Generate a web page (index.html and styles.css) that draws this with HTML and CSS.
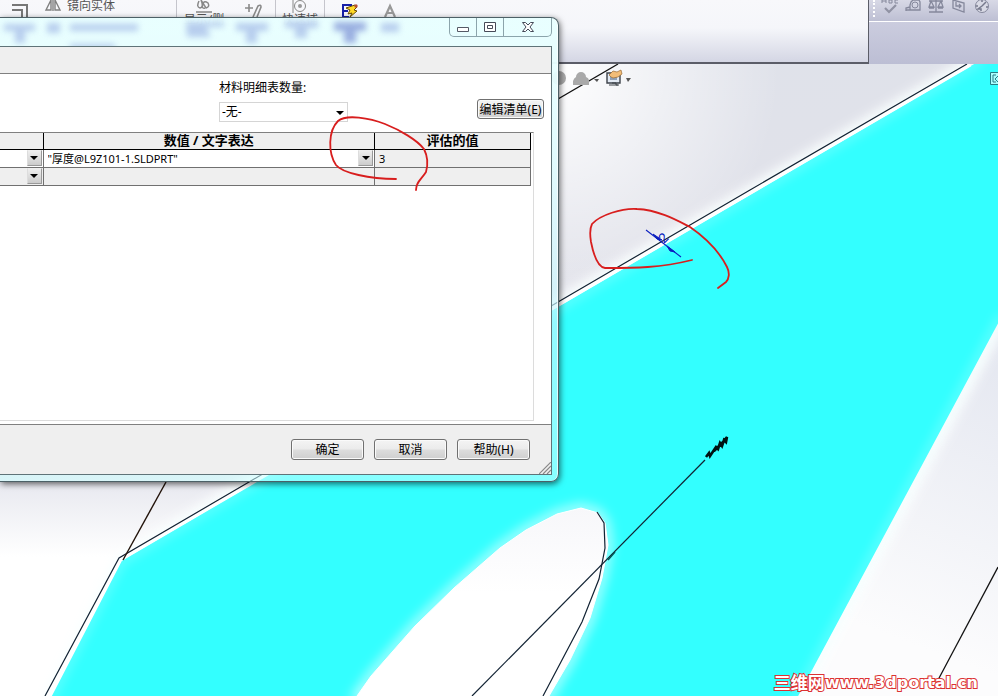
FILE: index.html
```
<!DOCTYPE html>
<html lang="zh-CN">
<head>
    <meta charset="UTF-8">
    <meta name="viewport" content="width=device-width, initial-scale=1.0">
    <title>方程式</title>
    <link rel="stylesheet" href="styles.css">
</head>
<body>
    <!-- model view -->
    <svg class="scene" viewBox="0 0 998 696" preserveAspectRatio="xMinYMin slice" aria-hidden="true">
        <defs>
            <linearGradient id="sky" x1="0" y1="0" x2="0" y2="1">
                <stop offset="0" stop-color="#dfe2ea"/>
                <stop offset=".35" stop-color="#e1e2ea"/>
                <stop offset=".69" stop-color="#e7e8ef"/>
                <stop offset=".8" stop-color="#ffffff"/>
            </linearGradient>
            <radialGradient id="corner" gradientUnits="userSpaceOnUse" cx="550" cy="70" r="230">
                <stop offset="0" stop-color="#fff"/>
                <stop offset="1" stop-color="#fff" stop-opacity="0"/>
            </radialGradient>
            <linearGradient id="side" gradientUnits="userSpaceOnUse" x1="900" y1="640" x2="1010" y2="350">
                <stop offset="0" stop-color="#fcfcfd"/>
                <stop offset="1" stop-color="#e4e7f0"/>
            </linearGradient>
            <linearGradient id="slot" x1="0" y1="0" x2="0" y2="1">
                <stop offset="0" stop-color="#f7f7fa"/>
                <stop offset=".45" stop-color="#fff"/>
            </linearGradient>
            <filter id="soft" x="-20%" y="-20%" width="140%" height="140%"><feGaussianBlur stdDeviation="6"/></filter>
        </defs>
        <rect width="998" height="696" fill="url(#sky)"/>
        <rect x="550" y="60" width="448" height="260" fill="url(#corner)"/>
        <path d="M998 315 998 696 790 696Z" fill="url(#side)"/>
        <path d="M980 60 558 305 254 481 121 561 48 700M1002 316 796 700" fill="none" stroke="#fff" stroke-width="15" filter="url(#soft)"/>
        <path d="M981 60 558 307 256 482 121 561 49 700 796 700 1002 316 1002 60Z" fill="#33ffff"/>
        <path d="M981 60 558 307 256 482 121 561 49 700M796 700 1002 316" fill="none" stroke="#d5ffff" stroke-width="4" opacity=".6" filter="url(#soft)"/>
        <path d="M970 64 558 304 252 482 120 559 47 700" fill="none" stroke="#fff" stroke-width="5"/>
        <path class="edge" d="M967 64 750 190 558 302 249 482 119 558 45 696"/>
        <path d="M357 696 371 676 415 626 454 588 500 548 526 530 557 514 581 508 598 513 605 523 608 545 602 578 590 618 570 660 549 696Z" fill="none" stroke="#c5ffff" stroke-width="8" filter="url(#soft)"/>
        <path d="M357 696 371 676 415 626 454 588 500 548 526 530 557 514 581 508 598 513 605 523 608 545 602 578 590 618 570 660 549 696Z" fill="url(#slot)" stroke="#fff"/>
        <path class="edge" d="M597 512 604 523 605 548 599 579 582 622 543 696"/>
        <path class="edge" d="M472 696 705 460"/>
        <path d="M608 560 615 552" stroke="#055" stroke-width="1.5"/>
        <path d="M706 457l3-4 1 3 4-6M714 450l2-3 2 2 2-6 2 3 2-6 2 2 1-5-4 5-6 6-3 3" fill="none" stroke="#001212" stroke-width="2.600"/>
        <path d="M166 482 123 560" stroke="#22130a" stroke-width="1.4"/>
        <path d="M558 99 618 64" stroke="#111" stroke-width="1.4"/>
        <path d="M998 567 938 680" stroke="#111" stroke-width="1.3"/>
        <!-- heads-up view icons -->
        <circle cx="559" cy="78" r="7" fill="#a9a9a9"/>
        <path d="M573 85v-4q1-3 3-4a5 5 0 1 1 10 0q3 1 3 4v4Z" fill="#a9a9a9"/>
        <path d="M594 79h5l-2 3ZM626 78h5l-3 4Z" fill="#555"/>
        <path d="M607 73h13v10h-13Z" fill="#e3eaf4" stroke="#3d4249" stroke-width="1.4"/>
        <path d="M610 76h7v4h-7Z" fill="#8fa1b8"/>
        <path d="M612 83h4v2h3M609 85h9" stroke="#3d4249" fill="none"/>
        <path d="M609 75l4-4 4 1 4-2 1 4-4 3-5 1-2-1Z" fill="#f2bd78" stroke="#9a6a32" stroke-width=".7"/>
        <path d="M990.500 72.500h12v12h-12Z" fill="#aff" stroke="#287c86"/>
        <path d="M996 75h-3v7h3M998 76l-3 3 3 3" fill="none" stroke="#287c86"/>
        <!-- thickness dimension -->
        <g stroke="#0a1fc0" fill="#0a1fc0">
            <path d="M646 230 681 257" stroke-width="1.1"/>
            <path d="M653 234 662 240 657 239ZM667 246 675 252 670 251Z"/>
            <text class="dimension" transform="translate(664 244) rotate(-45)">2</text>
        </g>
    </svg>

    <header class="topbar">
        <div class="ribbon">
            <div class="tool">
                <svg width="20" height="18" viewBox="0 0 20 18"><path d="M2 5h15v13M2 10h10v8" fill="none" stroke="#777" stroke-width="2"/></svg>
            </div>
            <div class="mirror">
                <svg width="18" height="12" viewBox="0 0 18 12"><path d="M7 0 2 10h5V0M11 0l5 10h-5V0M9 0v11" fill="none" stroke="#808080" stroke-width="1.4"/></svg>
                <span>镜向实体</span>
            </div>
            <div class="tool tool-wide">
                <svg width="20" height="14" viewBox="0 0 20 14"><path d="M5 1q-3 6 1 7 4-1 1-8l5 8q4-1 2-5-4-3-5 1-2 5 2 4M2 12h16" fill="none" stroke="#888" stroke-width="1.5"/></svg>
                <span>显示/删</span>
            </div>
            <div class="tool tool-pencil">
                <svg width="18" height="18" viewBox="0 0 18 18"><path d="M1 8h8M5 4v8M9 17l5-11q3-2 3 1l-4 10" fill="none" stroke="#8a8a8a" stroke-width="1.6"/></svg>
            </div>
            <div class="tool tool-snap">
                <svg width="18" height="14" viewBox="0 0 18 14"><path d="M2 0v13" stroke="#888"/><circle cx="9" cy="6" r="5.500" fill="none" stroke="#888"/><circle cx="9" cy="6" r="2" fill="#999"/></svg>
                <span>快速捕</span>
            </div>
            <div class="tool tool-sketch">
                <svg width="18" height="18" viewBox="0 0 18 18"><path d="M11 5H2v12h6M2 11h5" fill="none" stroke="#1720a8" stroke-width="2"/><path d="M5 8l9-3 2 2-3 3 3 1-7 6 2-4-4 1 2-4Z" fill="#ffd927" stroke="#6b4d05"/><circle cx="15" cy="6" r="1.700" fill="#b65034"/></svg>
            </div>
            <div class="tool tool-text">
                <svg width="18" height="18" viewBox="0 0 18 18"><path d="M4 17 9 6l5 11M6 13h6" fill="none" stroke="#999" stroke-width="2.200"/></svg>
            </div>
        </div>
        <div class="tools-area">
            <div class="quick">
                <i class="grip"></i>
                <svg width="18" height="14" viewBox="0 0 18 14"><path d="M1 3V0M5 3V0M1 1h4M8 3h3V0H8V3ZM17 0h-3v3h3" fill="none" stroke="#85889c"/><path d="M4 8l4 4 7-7" fill="none" stroke="#9092a3" stroke-width="2.200"/></svg>
                <svg width="18" height="14" viewBox="0 0 18 14"><path d="M7 2l2-2h6l1 2v8H6V5ZM6 7 2 8v3M2 10h14" fill="none" stroke="#85889c" stroke-width="1.300"/><circle cx="11" cy="5" r="3" fill="none" stroke="#85889c"/></svg>
                <svg width="18" height="14" viewBox="0 0 18 14"><path d="M9 0v12M2 12h14M2 1h14M4 1 2 7h5ZM14 1l-3 6h5ZM2 8h5M11 8h5" fill="none" stroke="#85889c" stroke-width="1.300"/></svg>
                <svg width="18" height="14" viewBox="0 0 18 14"><path d="M3 0v8l11 4V3L3 0M6 2v4h5M9 4l2 2-2 2" fill="none" stroke="#85889c" stroke-width="1.300"/></svg>
                <svg width="18" height="14" viewBox="0 0 18 14"><circle cx="9" cy="6" r="6.500" fill="#d9dae5" stroke="#85889c"/><path d="M9 6l4-4M9 0v2M3 6h2M13 7h2M9 6 5 9h3v2" fill="none" stroke="#777a8d" stroke-width="1.500"/></svg>
            </div>
        </div>
    </header>

    <section class="dialog" role="dialog" aria-label="方程式">
        <div class="titlebar">
            <svg class="glass" width="410" height="28" viewBox="0 0 410 28" aria-hidden="true">
                <defs><filter id="blur"><feGaussianBlur stdDeviation="3"/></filter></defs>
                <g fill="#8fa6e0" opacity=".55" filter="url(#blur)">
                    <path d="M4 6h31v7H25v12H15V13H4ZM47 5h13v10H47ZM70 6h68v7H70ZM70 26h45v6H70ZM186 4h38v5h-18l5 10h-24ZM236 5h32v8h-11v12H246V13h-10ZM285 3h33v7h-11v10h-12V10h-10ZM381 5h18v9h-18Z"/>
                    <path d="M334 4h32v9h-10v12h-12V13h-10Z" fill="#5a6ec8"/>
                </g>
            </svg>
            <div class="window-buttons">
                <button aria-label="最小化"><svg width="14" height="12" viewBox="0 0 14 12"><path d="M1.500 6.500h11v4h-11Z" fill="#fff" stroke="#555a66"/></svg></button>
                <button aria-label="最大化"><svg width="14" height="12" viewBox="0 0 14 12"><path d="M1.500 1.500h11v9h-11ZM4.500 4.500h5v3h-5Z" fill="#fff" stroke="#454a58"/></svg></button>
                <button class="close" aria-label="关闭"><svg width="14" height="12" viewBox="0 0 14 12"><path d="M1.500 1.500h3L7 4l2.500-2.500h3L9 6l3.500 4.500h-3L7 8l-2.500 2.500h-3L5 6Z" fill="#fff" stroke="#454a58"/></svg></button>
            </div>
        </div>
        <div class="client">
            <div class="strip"></div>
            <div class="content">
                <div class="form">
                    <div class="field">
                        <label for="quantity">材料明细表数量:</label>
                        <select id="quantity"><option>-无-</option></select>
                    </div>
                    <button class="btn edit">编辑清单(E)</button>
                </div>
                <div class="list">
                    <table>
                        <colgroup><col class="col-name"><col><col class="col-result"></colgroup>
                        <thead>
                            <tr><th></th><th>数值 / 文字表达</th><th>评估的值</th></tr>
                        </thead>
                        <tbody>
                            <tr class="active">
                                <td><div class="cell"><button class="drop" aria-label="名称"></button></div></td>
                                <td><div class="cell"><input type="text" aria-label="数值 / 文字表达" value="&quot;厚度@L9Z101-1.SLDPRT&quot;"><button class="drop" aria-label="选择"></button></div></td>
                                <td class="result">3</td>
                            </tr>
                            <tr>
                                <td><div class="cell"><button class="drop" aria-label="名称"></button></div></td>
                                <td></td>
                                <td class="result"></td>
                            </tr>
                        </tbody>
                    </table>
                </div>
            </div>
            <div class="footer">
                <button class="btn">确定</button>
                <button class="btn">取消</button>
                <button class="btn">帮助(H)</button>
                <svg class="resize" width="12" height="12" viewBox="0 0 12 12"><path d="M0 12 12 0M4 12l8-8M8 12l4-4" stroke="#888" stroke-width="1.200"/></svg>
            </div>
        </div>
    </section>

    <!-- red pen marks -->
    <svg class="marks" viewBox="0 0 998 696" preserveAspectRatio="xMinYMin slice" aria-hidden="true">
        <path d="M396 179C370 179 342 173 336 165 328 153 328 131 338 121 346 114 370 118 385 124 400 130 417 140 424 149 428 157 428 165 426 172 421 180 416 182 416 190"/>
        <path d="M692 260C660 268 635 268 605 268 597 267 593 252 591 242 590 236 590 228 592 224 600 215 622 208 637 209 660 210 680 222 690 227 706 238 720 253 727 267 730 273 729 279 726 282L718 288"/>
    </svg>

    <div class="watermark"><span>三维网</span>www.3dportal.cn</div>
</body>
</html>
```
FILE: styles.css
```
* {
  box-sizing: border-box;
}
body {
  position: relative;
  margin: 0;
  min-height: 100vh;
  overflow: hidden;
  font-family: "Noto Sans", "Noto Sans CJK SC", sans-serif;
  font-size: 12px;
  color: #000;
}
button, input, select {
  font: inherit;
  color: inherit;
}
svg {
  flex: none;
}
.scene, .marks {
  position: absolute;
  top: 0;
  left: 0;
  width: 100%;
  height: 100%;
}
.edge {
  fill: none;
  stroke: #123;
  stroke-width: 1.2;
}
.dimension {
  font: 14px "Liberation Sans", sans-serif;
  stroke: none;
}
.marks {
  pointer-events: none;
}
.marks path {
  fill: none;
  stroke: #d81e1e;
  stroke-width: 1.8;
  stroke-linecap: round;
}

/* toolbar */
.topbar {
  position: relative;
  display: flex;
  height: 64px;
}
.ribbon {
  flex: 1;
  display: flex;
  align-items: flex-start;
  background: linear-gradient(#f8f8fb, #f5f6fa 45%, #d4d6e4);
  border-right: 1px solid #5b5d68;
  border-bottom: 2px solid #5b5d68;
  color: #555;
}
.tool {
  display: flex;
  flex-direction: column;
  align-items: center;
  width: 40px;
  height: 18px;
}
.tool span {
  line-height: 12px;
  white-space: nowrap;
}
.mirror {
  display: flex;
  gap: 5px;
  width: 137px;
  height: 18px;
  padding-left: 4px;
  border-right: 1px solid #c5c5cc;
  line-height: 12px;
}
.tool-wide {
  width: 54px;
}
.tool-pencil {
  width: 45px;
  border-right: 1px solid #c5c5cc;
}
.tool-snap {
  width: 49px;
  border-right: 1px solid #c5c5cc;
}
.tool-sketch {
  width: 50px;
}
.tool-text {
  width: 30px;
}
.tools-area {
  width: 129px;
  background: linear-gradient(#d3d4e4, #bcbed4);
}
.quick {
  display: flex;
  gap: 5px;
  height: 22px;
  padding-left: 4px;
  background: linear-gradient(#d8d9e6, #bdbfd3);
  border-bottom: 1px solid #fff;
}
.grip {
  width: 3px;
  height: 17px;
  border-left: 2px dotted #fff;
}

/* dialog window */
.dialog {
  position: absolute;
  top: 17px;
  left: 0;
  width: 559px;
  padding: 0 6px 6px 0;
  background: linear-gradient(rgba(232, 255, 255, .97) 40px, rgba(200, 246, 255, .65) 300px, rgba(205, 255, 255, .55));
  border: 1px solid #4c6066;
  border-left: 0;
  border-radius: 0 8px 8px 0;
  box-shadow: inset -1px 0 0 rgba(255, 255, 255, .7), 1px 2px 6px rgba(0, 0, 0, .6);
}
.titlebar {
  display: flex;
  justify-content: space-between;
  height: 28px;
}
.window-buttons {
  display: flex;
  height: 19px;
  border: 1px solid #8ba4ab;
  border-top: 0;
  border-radius: 0 0 5px 5px;
}
.window-buttons button {
  display: flex;
  align-items: center;
  justify-content: center;
  width: 27px;
  padding: 0;
  background: none;
  border: 0;
  border-right: 1px solid #8ba4ab;
}
.window-buttons .close {
  width: 47px;
  border-right: 0;
}
.client {
  border: 1px solid #5f7378;
  border-left: 0;
  background: #fff;
}
.strip {
  height: 27px;
  background: #efefef;
  border-bottom: 1px solid #808080;
}
.content {
  padding: 6px 0 3px;
}
.form {
  display: flex;
  justify-content: space-between;
  align-items: flex-end;
  padding: 0 7px 10px 219px;
}
.field {
  position: relative;
  display: flex;
  flex-direction: column;
  gap: 6px;
}
.field label {
  line-height: 16px;
}
.field select {
  width: 129px;
  height: 20px;
  padding: 0 2px 2px;
  appearance: none;
  border: 1px solid #d5d5d5;
  border-radius: 0;
  background: #fff;
}
.field::after {
  content: "";
  position: absolute;
  right: 4px;
  bottom: 7px;
  border: 4px solid transparent;
  border-top-color: #000;
  border-bottom: 0;
  pointer-events: none;
}
.btn {
  width: 73px;
  height: 21px;
  padding: 0;
  border: 1px solid #707070;
  border-radius: 3px;
  background: linear-gradient(#f4f4f4, #ebebeb 48%, #dddddd 52%, #cfcfcf);
  box-shadow: inset 0 0 0 1px #fafafa;
  line-height: 17px;
  white-space: nowrap;
}
.btn.edit {
  width: 67px;
  height: 20px;
  margin-bottom: 3px;
}
.list {
  height: 289px;
  margin-right: 17px;
  border: 1px solid #dcdcdc;
  border-top-color: #808080;
  border-left: 0;
}
table {
  width: calc(100% - 2px);
  table-layout: fixed;
  border-collapse: collapse;
}
.col-name {
  width: 43px;
}
.col-result {
  width: 156px;
}
th {
  height: 16px;
  padding: 0;
  background: #efefef;
  border: 1px solid #000;
  border-top: 0;
  font-size: 13px;
  line-height: 15px;
}
td {
  height: 18px;
  padding: 0;
  background: #efefef;
  border: 1px solid #707070;
  line-height: 17px;
}
th:first-child, td:first-child {
  border-left: 0;
}
.active td {
  background: #fff;
}
.active .result {
  background: #efefef;
}
.result {
  padding-left: 4px;
  font-size: 11px;
}
.cell {
  display: flex;
  justify-content: flex-end;
  height: 17px;
}
.cell input {
  flex: 1;
  min-width: 0;
  padding: 0 4px;
  border: 0;
  background: none;
  font-size: 11px;
}
.drop {
  display: flex;
  align-items: center;
  justify-content: center;
  width: 15px;
  height: 16px;
  margin-right: 1px;
  padding: 0;
  border: 1px solid #999;
  border-top-color: #eee;
  border-left-color: #ddd;
  background: linear-gradient(#eee, #ccc);
}
.drop::before {
  content: "";
  border: 4px solid transparent;
  border-top-color: #000;
  border-bottom: 0;
}
.footer {
  position: relative;
  display: flex;
  justify-content: flex-end;
  gap: 10px;
  padding: 14px 21px 14px 0;
  background: #efefef;
  border-top: 1px solid #808080;
}
.resize {
  position: absolute;
  right: 0;
  bottom: 0;
}

.watermark {
  position: absolute;
  right: 20px;
  bottom: 3px;
  display: flex;
  align-items: center;
  color: #fff;
  font: bold 16px/20px "DejaVu Sans", "Noto Sans CJK SC", sans-serif;
  -webkit-text-stroke: 2px #dc3232;
  paint-order: stroke fill;
}
.watermark span {
  font-size: 17px;
}
```
